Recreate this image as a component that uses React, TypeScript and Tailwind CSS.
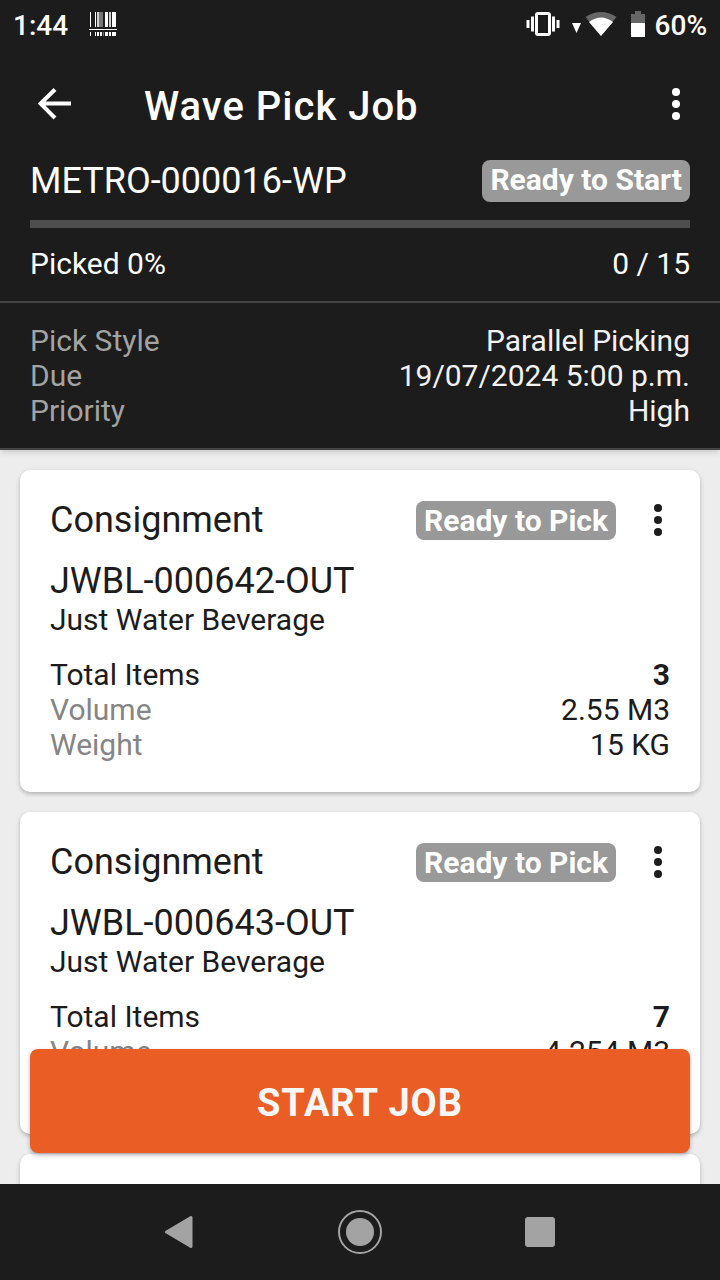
import type { ReactNode } from 'react';
import clsx from 'clsx';

const jobDetails = [
  { label: 'Pick Style', value: 'Parallel Picking' },
  { label: 'Due', value: '19/07/2024 5:00 p.m.' },
  { label: 'Priority', value: 'High' },
];

const consignments = [
  { id: 'JWBL-000642-OUT', customer: 'Just Water Beverage', items: '3', volume: '2.55 M3', weight: '15 KG' },
  { id: 'JWBL-000643-OUT', customer: 'Just Water Beverage', items: '7', volume: '4.254 M3', weight: '35 KG' },
];

function MoreIcon() {
  return (
    <svg width="8" height="32" viewBox="0 0 8 32" fill="currentColor" aria-hidden="true">
      <circle cx="4" cy="4" r="4" />
      <circle cx="4" cy="16" r="4" />
      <circle cx="4" cy="28" r="4" />
    </svg>
  );
}

function Badge({ children, className }: { children: ReactNode; className?: string }) {
  return (
    <span className={clsx('rounded-lg bg-[#999999] px-2 text-[30px] font-bold text-white', className)}>
      {children}
    </span>
  );
}

function StatusBar() {
  return (
    <div className="flex h-12 shrink-0 items-center justify-between px-[13px] text-[28px] font-medium">
      <div className="flex items-center gap-[21px]">
        <span className="pt-0.5">1:44</span>
        <svg width="28" height="24" viewBox="0 0 28 24" fill="white" aria-hidden="true">
          <path d="M1 0h1v15H1zM6 0h1v15H6zM16 0h3v15h-3zM23 0h4v15h-4zM1 20h1v4H1zM6 20h1v4H6zM8 20h2v4H8zM11 20h2v4h-2zM16 20h3v4h-3zM20 20h2v4h-2zM23 20h4v4h-4zM0 17h28v1H0z" />
          <path d="M8 0h2v15H8zM10.500 0h1v15h-1zM20 0h2v15h-2z" opacity="0.8" />
          <path d="M12 0h2v15h-2zM14 20h1v4h-1z" opacity="0.4" />
        </svg>
      </div>
      <div className="flex items-center">
        <svg width="34" height="24" viewBox="0 0 34 24" aria-hidden="true">
          <rect x="10.500" y="1.500" width="13" height="21" rx="1.500" fill="none" stroke="white" strokeWidth="3" />
          <path d="M0.500 8h3v8h-3zM5 4.500h3v15H5zM26 4.500h3v15h-3zM30.500 8h3v8h-3z" fill="white" />
        </svg>
        <svg className="ml-3 mt-2" width="9" height="10" viewBox="0 0 9 10" aria-hidden="true">
          <path d="M0 0h9L4.500 10z" fill="white" />
        </svg>
        <svg className="ml-1" width="32" height="24" viewBox="0 0 32 24" aria-hidden="true">
          <path d="M0.500 5Q16 -5 31.500 5L16 24z" fill="#666666" />
          <path d="M4 10Q16 1 28 10L16 24z" fill="white" />
        </svg>
        <svg className="ml-[14px]" width="14" height="26" viewBox="0 0 14 26" aria-hidden="true">
          <path d="M4 0h6v3h4v9H0V3h4z" fill="#666666" />
          <path d="M0 12h14v14H0z" fill="white" />
        </svg>
        <span className="ml-[10px] pt-0.5">60%</span>
      </div>
    </div>
  );
}

function AppBar() {
  return (
    <div className="flex h-28 shrink-0 items-center pl-[38px] pr-10">
      <button type="button" aria-label="Back">
        <svg width="34" height="32" viewBox="0 0 34 32" aria-hidden="true">
          <path d="M17 1.500L2.500 15.500L17 30M2 15.500h31" fill="none" stroke="white" strokeWidth="4" />
        </svg>
      </button>
      <h1 className="ml-[72px] grow pt-1 text-[40px] font-medium tracking-wide">Wave Pick Job</h1>
      <button type="button" aria-label="Job options">
        <MoreIcon />
      </button>
    </div>
  );
}

function JobHeader() {
  return (
    <header className="relative z-10 shrink-0 border-b-2 border-[#444444] bg-[#1c1c1c] text-white shadow-md">
      <StatusBar />
      <AppBar />
      <div className="border-b-2 border-[#444444] px-[30px] pb-5">
        <div className="flex items-center justify-between">
          <h2 className="text-[36px] leading-[42px]">METRO-000016-WP</h2>
          <Badge className="h-[42px] leading-[40px]">Ready to Start</Badge>
        </div>
        <div role="progressbar" aria-label="Picked" aria-valuenow={0} className="mt-[18px] h-2 bg-[#4d4d4d]" />
        <div className="mt-[18px] flex justify-between">
          <span>Picked 0%</span>
          <span>0 / 15</span>
        </div>
      </div>
      <dl className="px-[30px] py-5">
        {jobDetails.map((row) => (
          <div key={row.label} className="flex justify-between">
            <dt className="text-[#a3a3a3]">{row.label}</dt>
            <dd className="text-[#f2f2f2]">{row.value}</dd>
          </div>
        ))}
      </dl>
    </header>
  );
}

function Card({ children, className }: { children?: ReactNode; className?: string }) {
  return (
    <article
      className={clsx('shrink-0 rounded-[10px] bg-white p-[30px] shadow-[0_2px_4px_rgba(0,0,0,0.25)]', className)}
    >
      {children}
    </article>
  );
}

function ConsignmentCard({ item }: { item: (typeof consignments)[number] }) {
  return (
    <Card>
      <div className="flex h-10 items-center">
        <h3 className="grow text-[36px] leading-10">Consignment</h3>
        <Badge className="leading-[39px]">Ready to Pick</Badge>
        <button type="button" aria-label={`Options for ${item.id}`} className="ml-[38px] mr-2">
          <MoreIcon />
        </button>
      </div>
      <p className="mt-5 text-[36px] leading-[42px]">{item.id}</p>
      <p>{item.customer}</p>
      <dl className="mt-5">
        <div className="flex justify-between">
          <dt>Total Items</dt>
          <dd className="font-bold">{item.items}</dd>
        </div>
        <div className="flex justify-between">
          <dt className="text-[#858585]">Volume</dt>
          <dd>{item.volume}</dd>
        </div>
        <div className="flex justify-between">
          <dt className="text-[#858585]">Weight</dt>
          <dd>{item.weight}</dd>
        </div>
      </dl>
    </Card>
  );
}

function NavBar() {
  return (
    <nav className="flex h-24 shrink-0 items-center justify-center gap-[136px] bg-[#1c1c1c] text-[#a3a3a3]">
      <button type="button" aria-label="System back" className="flex w-11 justify-center">
        <svg width="30" height="34" viewBox="0 0 30 34" aria-hidden="true">
          <path d="M1.500 17L26 2.500V31.500z" fill="currentColor" stroke="currentColor" strokeWidth="3" strokeLinejoin="round" />
        </svg>
      </button>
      <button type="button" aria-label="Home">
        <svg width="44" height="44" viewBox="0 0 44 44" aria-hidden="true">
          <circle cx="22" cy="22" r="21" fill="none" stroke="currentColor" strokeWidth="2" />
          <circle cx="22" cy="22" r="14" fill="currentColor" />
        </svg>
      </button>
      <button type="button" aria-label="Recent apps" className="flex w-11 justify-center">
        <span className="size-[30px] rounded-[3px] bg-current" />
      </button>
    </nav>
  );
}

export default function App() {
  return (
    <div className="flex h-dvh flex-col bg-[#ededed] font-[Roboto,sans-serif] text-[30px] leading-[35px] text-[#1c1c1c]">
      <JobHeader />
      <div className="relative min-h-0 grow">
        <main className="flex h-full flex-col gap-5 overflow-y-auto p-5 [scrollbar-width:none]">
          {consignments.map((item) => (
            <ConsignmentCard key={item.id} item={item} />
          ))}
          {/* next consignment, still loading */}
          <Card className="h-80" />
        </main>
        <button
          type="button"
          className="absolute inset-x-[30px] bottom-[31px] h-[104px] rounded-lg bg-[#ea5e25] pt-1 text-[38px] font-bold tracking-wide text-[#f7f7f7] shadow-[0_2px_4px_rgba(0,0,0,0.3)]"
        >
          START JOB
        </button>
      </div>
      <NavBar />
    </div>
  );
}
